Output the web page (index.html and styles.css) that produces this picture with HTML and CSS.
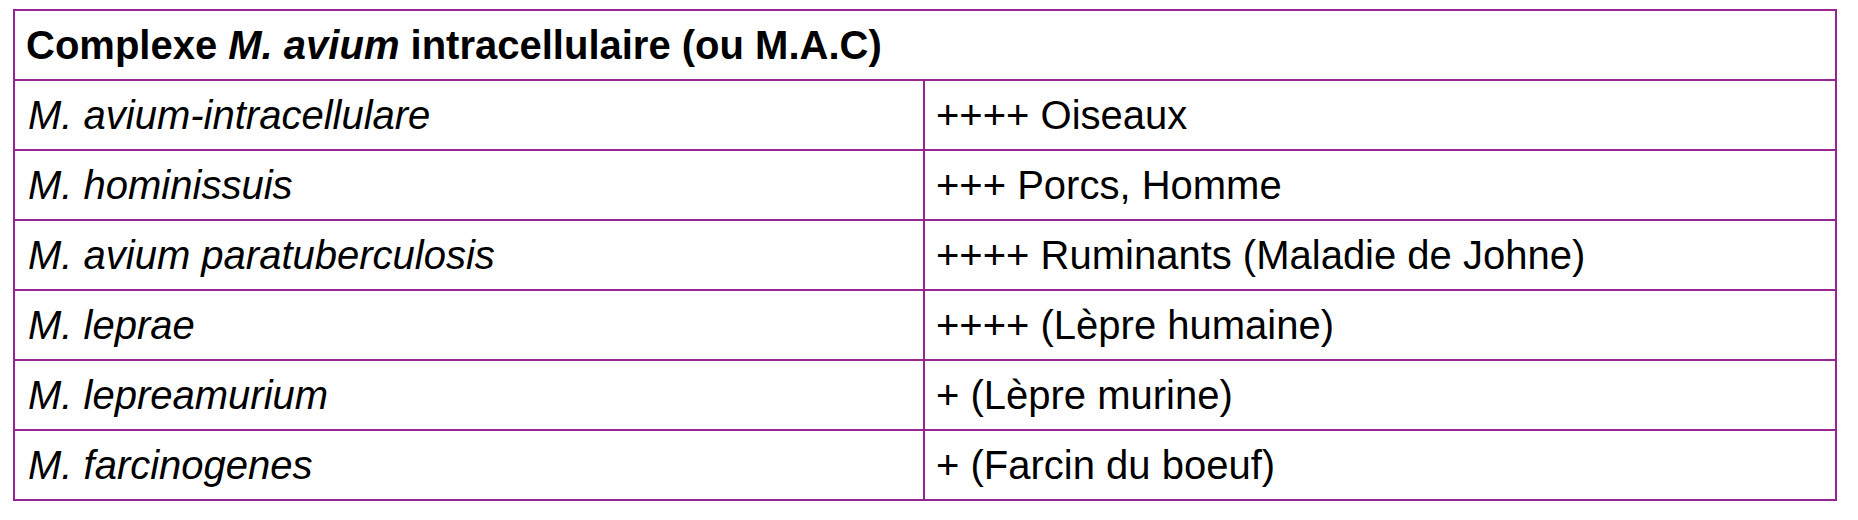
FILE: index.html
```html
<!DOCTYPE html>
<html lang="fr">
<head>
<meta charset="utf-8">
<title>Complexe M. avium</title>
<link rel="stylesheet" href="styles.css">
</head>
<body>
<table class="mac">
  <colgroup><col class="c1"><col class="c2"></colgroup>
  <tr><th colspan="2">Complexe <i>M. avium</i> intracellulaire (ou M.A.C)</th></tr>
  <tr><td class="sp">M. avium-intracellulare</td><td>++++ Oiseaux</td></tr>
  <tr><td class="sp">M. hominissuis</td><td>+++ Porcs, Homme</td></tr>
  <tr><td class="sp">M. avium paratuberculosis</td><td>++++ Ruminants (Maladie de Johne)</td></tr>
  <tr><td class="sp">M. leprae</td><td>++++ (Lèpre humaine)</td></tr>
  <tr><td class="sp">M. lepreamurium</td><td>+ (Lèpre murine)</td></tr>
  <tr><td class="sp">M. farcinogenes</td><td>+ (Farcin du boeuf)</td></tr>
</table>
</body>
</html>
```
FILE: styles.css
```css
html, body { margin: 0; padding: 0; background: #fff; }
body { padding: 9px 0 0 13px; font-family: "Liberation Sans", Arial, sans-serif; color: #000; }
.mac {
  border-collapse: collapse;
  table-layout: fixed;
  width: 1822px;
  font-size: 40px;
}
.c1 { width: 910px; }
.c2 { width: 912px; }
.mac th, .mac td {
  border: 2px solid #93278f;
  height: 68px;
  padding: 0 0 0 11px;
  text-align: left;
  vertical-align: middle;
  line-height: 1;
}
.mac th { font-weight: bold; }
.mac td.sp { font-style: italic; padding-left: 13px; }
```
